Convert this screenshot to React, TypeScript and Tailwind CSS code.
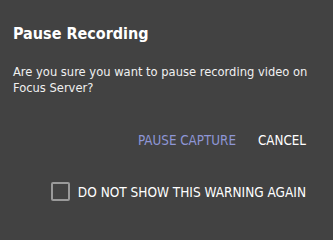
import React, { useState } from 'react';

export default function App() {
  const [dontShow, setDontShow] = useState(false);

  return (
    <div
      className="w-[333px] h-screen min-h-[215px] overflow-hidden bg-[#424242] text-white flex flex-col pl-[13px] pr-[16px] pt-[24px]"
      style={{ fontFamily: 'Tahoma, "DejaVu Sans Condensed", "DejaVu Sans", sans-serif' }}
    >
      {/* Title */}
      <h2 className="text-[16px] font-bold leading-[20px]">Pause Recording</h2>

      {/* Message */}
      <p className="mt-[20px] text-[12.8px] leading-[16px] text-[#f0f0f0]">
        Are you sure you want to pause recording video on Focus Server?
      </p>

      {/* Actions */}
      <div className="mt-[37px] pr-[11px] flex justify-end items-center gap-[22px] text-[13.3px] leading-[16px]">
        <button className="text-[#8e96d6] uppercase">Pause Capture</button>
        <button className="text-white uppercase">Cancel</button>
      </div>

      {/* Don't show again */}
      <label className="mt-[33px] pr-[11px] flex justify-end items-center gap-[8px] text-[13.5px] leading-[16px] cursor-pointer">
        <span
          onClick={() => setDontShow(!dontShow)}
          className="w-[19px] h-[19px] border-2 border-[#9a9a9a] rounded-[2px] flex items-center justify-center"
        >
          {dontShow && <span className="w-[9px] h-[9px] bg-[#9a9a9a]" />}
        </span>
        <span className="uppercase">Do not show this warning again</span>
      </label>
    </div>
  );
}
